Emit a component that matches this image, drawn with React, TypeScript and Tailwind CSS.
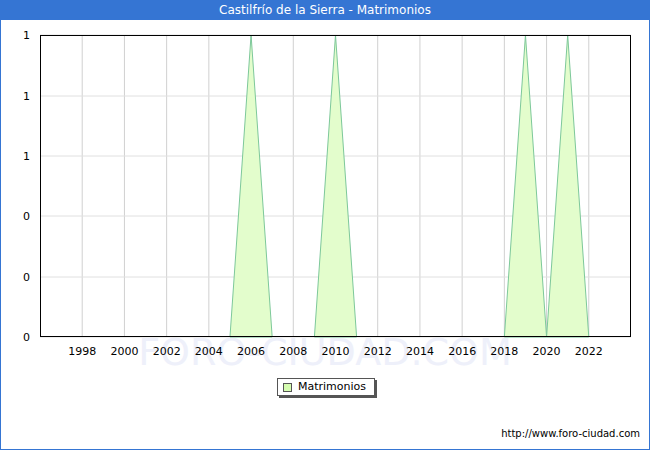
export default function App() {
  const X = (y: number) => 40 + (y - 1996) * (591 / 28);
  const peaks = [2006, 2010, 2019, 2021];
  const ys = [35, 96, 156, 216, 277, 337];
  const yl = ["1", "1", "1", "0", "0", "0"];
  const years = [1998, 2000, 2002, 2004, 2006, 2008, 2010, 2012, 2014, 2016, 2018, 2020, 2022];
  return (
    <div className="w-[650px] h-[450px] bg-[#3575d3] flex flex-col" style={{ fontFamily: '"DejaVu Sans", sans-serif' }}>
      <div className="h-[20px] flex items-center justify-center text-white text-[12px]">Castilfrío de la Sierra - Matrimonios</div>
      <div className="flex-1 mx-px mb-px bg-white relative">
        <svg width="648" height="429" className="absolute left-0 top-0" viewBox="1 20 648 429">
          <text x="325" y="365" textAnchor="middle" fontSize="38" fill="#eef0fa" fontFamily="DejaVu Sans">FORO-CIUDAD.COM</text>
          {years.map((y) => (
            <line key={y} x1={X(y)} x2={X(y)} y1={35} y2={337} stroke="#d0d0d0" />
          ))}
          {ys.map((y) => (
            <line key={y} x1={40} x2={631} y1={y} y2={y} stroke="#e0e0e0" />
          ))}
          {peaks.map((p) => (
            <polygon key={p} points={`${X(p - 1)},337 ${X(p)},35 ${X(p + 1)},337`} fill="#e3fdcc" stroke="#7dc89a" strokeWidth="1" />
          ))}
          <rect x="40.5" y="35.5" width="590" height="301" fill="none" stroke="#000" />
          {ys.map((y, i) => (
            <text key={y} x="30" y={y + 4} textAnchor="end" fontSize="11" fill="#000" fontFamily="DejaVu Sans">{yl[i]}</text>
          ))}
          {years.map((y) => (
            <text key={y} x={X(y)} y="355" textAnchor="middle" fontSize="11" fill="#000" fontFamily="DejaVu Sans">{y}</text>
          ))}
        </svg>
        <div className="absolute left-[276px] top-[358px] w-[98px] h-[18px] border border-[#555] bg-white shadow-[2px_2px_0_#555] flex items-center text-[11px] gap-[6px] px-[5px]">
          <div className="w-[9px] h-[9px] bg-[#d5fdb0] border border-[#555]"></div>
          <span>Matrimonios</span>
        </div>
        <div className="absolute right-[9px] top-[406px] text-[10px]">http://www.foro-ciudad.com</div>
      </div>
    </div>
  );
}
